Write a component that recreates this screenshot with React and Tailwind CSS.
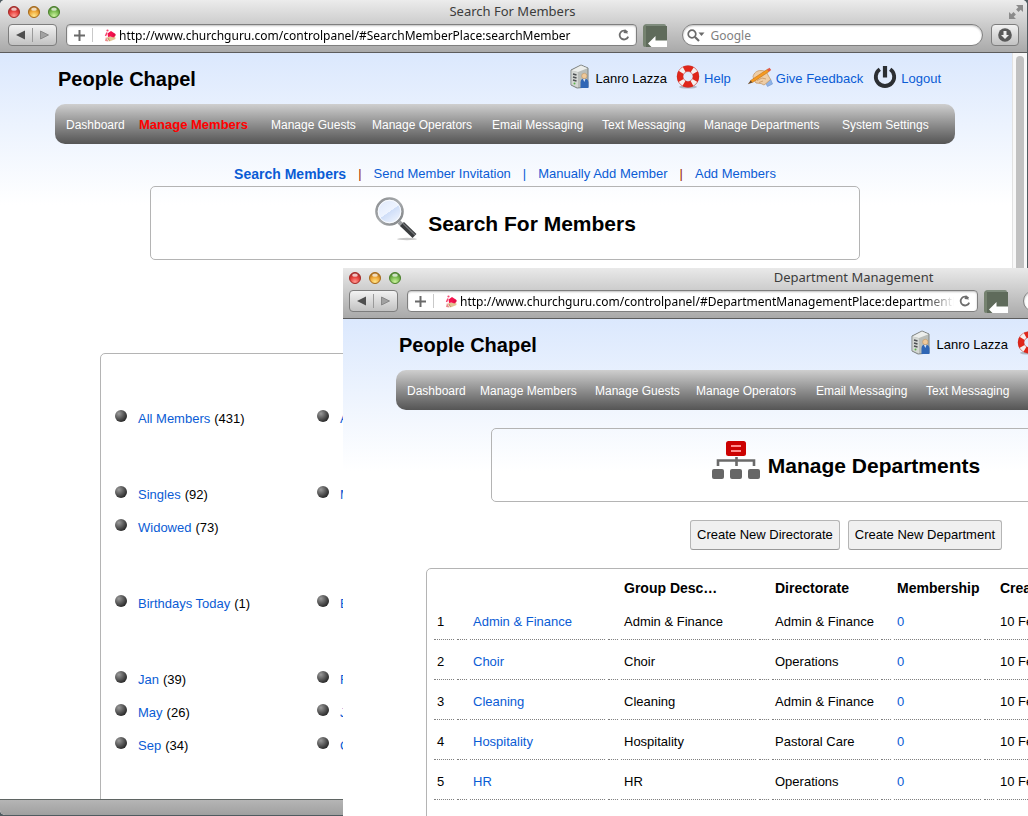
import React from "react";

const CHROME_FONT = "font-['Noto_Sans',sans-serif]";

/* ---------- browser chrome icons ---------- */

function TrafficLight({ id, label, dark, mid, light }) {
  return (
    <button type="button" aria-label={label} className="block h-3 w-3">
      <svg viewBox="0 0 12 12" className="block h-3 w-3">
        <defs>
          <radialGradient id={id} cx="50%" cy="85%" r="80%">
            <stop offset="0" stopColor={light} />
            <stop offset="0.55" stopColor={mid} />
            <stop offset="1" stopColor={dark} />
          </radialGradient>
        </defs>
        <circle cx="6" cy="6" r="5.5" fill={`url(#${id})`} stroke={dark} strokeWidth="1" />
        <ellipse cx="6" cy="3.2" rx="2.8" ry="1.6" fill="#fff" opacity="0.7" />
      </svg>
    </button>
  );
}

function Cupcake() {
  return (
    <svg viewBox="0 0 14 14" className="h-[14px] w-[14px] shrink-0" aria-hidden="true">
      <path d="M3.500 9.500l8.500-2 .5 3.500-6 2.500z" fill="#e3c493" />
      <path d="M3 9l2.500 4.500-3.500-.5z" fill="#e98a8a" />
      <path d="M5 10l1.500 3" stroke="#b98a55" strokeWidth="0.800" />
      <path d="M4.500 5.500L8 3l3 2 1.500 2-2 2.500-3-1L5 9z" fill="#f5124e" />
      <circle cx="11" cy="6.800" r="1.600" fill="#e00f45" />
      <circle cx="4.500" cy="2.500" r="1.100" fill="#f4476f" />
      <path d="M4 4.500L2.500 8" stroke="#f4476f" strokeWidth="1.500" />
    </svg>
  );
}

function Reload() {
  return (
    <svg viewBox="0 0 14 14" className="h-[14px] w-[14px]" aria-hidden="true">
      <path d="M10.400 4.200A4.400 4.400 0 1 0 11.200 8.600" fill="none" stroke="#6d6d6d" strokeWidth="1.800" />
      <path d="M6.500 5L11 5.500 8 1z" fill="#6d6d6d" />
    </svg>
  );
}

function ReaderTile() {
  return (
    <svg viewBox="0 0 25 24" className="h-6 w-[25px] shrink-0" aria-hidden="true">
      <rect x="1" y="0" width="22" height="22" rx="2" fill="#7f8c7d" />
      <rect x="0" y="1" width="4" height="22" rx="2" fill="#75826f" />
      <rect x="3" y="2" width="21" height="21" fill="#5f6b5b" />
      <path d="M24 16.500V23H8.500L5 19.500 12.500 12v4.500z" fill="#fff" />
    </svg>
  );
}

function Expand() {
  return (
    <svg viewBox="0 0 14 14" className="h-[14px] w-[14px]" aria-hidden="true" fill="#8b8b8b">
      <path d="M7 0h7v7l-2.300-2.300-2.200 2.200-2.400-2.400 2.200-2.200z" />
      <path d="M7 14H0V7l2.300 2.300 2.200-2.200 2.400 2.400-2.200 2.200z" />
    </svg>
  );
}

/* ---------- page icons ---------- */

function ServerUser() {
  return (
    <svg viewBox="0 0 20 25" className="h-[25px] w-5 shrink-0" aria-hidden="true">
      <path d="M1 6L11 1l7 3v19l-11 1-6-3z" fill="#b9bdb9" stroke="#7d8280" strokeWidth="1" />
      <path d="M1.500 6.500L11 1.500l6.500 2.700L8 8z" fill="#eceeec" />
      <path d="M1.500 6.500L8 8.500v15l-6.500-3z" fill="#d4d7d4" />
      <path d="M3 10l3.500 1M3 13l3.500 1M3 16l3.500 1" stroke="#4c5052" strokeWidth="1.400" />
      <circle cx="4.500" cy="19.500" r="1" fill="#5bb54a" />
      <path d="M10.500 24v-5.500c0-2.500 1.500-4 3.700-4s4.300 1.500 4.300 4V24z" fill="#2f66b5" />
      <path d="M13 15h2.500l-1.200 3z" fill="#dfe9f7" />
      <circle cx="14.300" cy="12" r="2.700" fill="#efc99a" stroke="#b98c58" strokeWidth="0.500" />
    </svg>
  );
}

function Lifebuoy() {
  return (
    <svg viewBox="0 0 24 24" className="h-6 w-6 shrink-0" aria-hidden="true">
      <ellipse cx="12" cy="22" rx="9" ry="1.600" fill="#000" opacity="0.22" />
      <circle cx="12" cy="11.500" r="8" fill="none" stroke="#e0261a" strokeWidth="6.200" />
      <circle
        cx="12"
        cy="11.500"
        r="8"
        fill="none"
        stroke="#f4f1f0"
        strokeWidth="6"
        strokeDasharray="4.200 8.366"
        transform="rotate(30 12 11.500)"
      />
      <circle cx="12" cy="11.500" r="10.900" fill="none" stroke="#b8302a" strokeWidth="0.500" opacity="0.7" />
      <circle cx="12" cy="11.500" r="5" fill="none" stroke="#b8302a" strokeWidth="0.500" opacity="0.7" />
    </svg>
  );
}

function WritingHand() {
  return (
    <svg viewBox="0 0 26 20" className="h-5 w-[26px] shrink-0" aria-hidden="true">
      <path d="M18 15l5.500-3 2 5-5 2.500z" fill="#8fb3e6" stroke="#6f96d0" strokeWidth="0.600" />
      <path
        d="M6 9.500c1-3.500 3.500-6 8-6 3.500 0 6 1.500 7 4.500l2.500 4.500-4.500 4-2 1.500-3-1.500-5-.5-2-3z"
        fill="#eecda6"
        stroke="#c49a6c"
        strokeWidth="0.800"
      />
      <path d="M10 13.500l5-2.500 4 1M12 15.500l4-1.500" stroke="#c08c58" strokeWidth="0.700" fill="none" />
      <path d="M3.500 13.500L20.500 2.200l1.600 2.300L5.500 15.500z" fill="#f59a22" stroke="#b8690f" strokeWidth="0.500" />
      <path d="M20 2.500l2.500-1.700 1.700 2.300-2.300 1.600z" fill="#e05a48" />
      <path d="M3.500 13.500L0.800 17.300l4.700-1.800z" fill="#6d4a26" />
    </svg>
  );
}

function Power() {
  return (
    <svg viewBox="0 0 24 24" className="h-6 w-6 shrink-0" aria-hidden="true">
      <path d="M6.800 4.200a9.200 9.200 0 1 0 10.400 0" fill="none" stroke="#2c2f33" strokeWidth="3.800" />
      <path d="M12 1v11.500" stroke="#2c2f33" strokeWidth="4.200" />
    </svg>
  );
}

function Magnifier() {
  return (
    <svg viewBox="0 0 44 45" className="h-[45px] w-11 shrink-0" aria-hidden="true">
      <defs>
        <linearGradient id="lens" x1="0.150" y1="0" x2="0.850" y2="1">
          <stop offset="0" stopColor="#dfe9fb" />
          <stop offset="0.500" stopColor="#eef4ff" />
          <stop offset="0.510" stopColor="#cfdef8" />
          <stop offset="1" stopColor="#f6f9ff" />
        </linearGradient>
        <linearGradient id="rim" x1="0" y1="0" x2="1" y2="1">
          <stop offset="0" stopColor="#8a8d90" />
          <stop offset="0.500" stopColor="#a9acae" />
          <stop offset="1" stopColor="#7b7e81" />
        </linearGradient>
      </defs>
      <ellipse cx="33" cy="43" rx="10" ry="1.200" fill="#000" opacity="0.22" />
      <path d="M25 26l4 4" stroke="#9b9ea1" strokeWidth="4" />
      <path d="M28 28L40.500 40" stroke="#3a3c3e" strokeWidth="5.600" />
      <path d="M28.500 27L41 39" stroke="#74777a" strokeWidth="1.200" />
      <circle cx="15.500" cy="15.500" r="13" fill="url(#lens)" stroke="url(#rim)" strokeWidth="2.600" />
      <circle cx="15.500" cy="15.500" r="11.300" fill="none" stroke="#fff" strokeWidth="0.800" />
    </svg>
  );
}

function OrgChart() {
  return (
    <svg viewBox="0 0 48 38" className="h-[38px] w-12 shrink-0" aria-hidden="true">
      <rect x="14" y="0" width="20" height="15" rx="2.500" fill="#cc0202" />
      <path d="M19 5h10M19 10h10" stroke="#ff8d8d" strokeWidth="2" />
      <path d="M6 25v-5.500h36V25M24.500 16v9" fill="none" stroke="#6a6a6a" strokeWidth="2.600" />
      <rect x="0" y="28" width="12" height="10" rx="2" fill="#666" />
      <rect x="18" y="28" width="12" height="10" rx="2" fill="#666" />
      <rect x="36" y="28" width="12" height="10" rx="2" fill="#666" />
    </svg>
  );
}

/* ---------- window ---------- */

function BrowserWindow({ id, title, url, scrollbar, children }) {
  return (
    <section className="flex h-full w-full flex-col overflow-hidden rounded-[5px] bg-white">
      <header
        className={`${CHROME_FONT} shrink-0 border-b border-[#5c5c5c] bg-gradient-to-b from-[#ececec] to-[#a9a9a9]`}
      >
        <div className="flex h-6 items-center justify-between pr-1 pl-2">
          <div className="flex w-[60px] gap-2">
            <TrafficLight id={`${id}-red`} label="Close" dark="#a32a27" mid="#e8423e" light="#ff9b93" />
            <TrafficLight id={`${id}-yellow`} label="Minimize" dark="#a5691a" mid="#f0a838" light="#ffe78c" />
            <TrafficLight id={`${id}-green`} label="Zoom" dark="#4a7f2b" mid="#7dbd52" light="#cdf3a0" />
          </div>
          <h1 className="pb-[2px] text-[13px] leading-5 text-[#3c3c3c]">{title}</h1>
          <button type="button" aria-label="Full screen" className="flex w-[66px] justify-end">
            <Expand />
          </button>
        </div>
        <div className="flex h-7 items-start pr-2 pl-2">
          <div className="mr-[9px] flex h-[22px] w-[49px] shrink-0 rounded-[4px] border border-[#7d7d7d] bg-gradient-to-b from-[#f2f2f2] to-[#c2c2c2]">
            <button type="button" aria-label="Back" className="flex flex-1 items-center justify-center">
              <svg viewBox="0 0 9 10" className="h-[10px] w-[9px]">
                <path d="M0 5l9-4.500v9z" fill="#4f4f4f" />
              </svg>
            </button>
            <span className="my-[3px] w-px bg-[#9a9a9a]" />
            <button type="button" aria-label="Forward" className="flex flex-1 items-center justify-center">
              <svg viewBox="0 0 9 10" className="h-[10px] w-[9px]">
                <path d="M8.500 5l-8-4v8z" fill="#a2a2a2" stroke="#7c7c7c" strokeWidth="0.800" />
              </svg>
            </button>
          </div>
          <div className="flex h-[22px] min-w-0 flex-[573] items-center rounded-[4px] border border-[#7f7f7f] bg-white pr-[5px] shadow-[inset_0_1px_2px_rgba(0,0,0,0.25)]">
            <button type="button" aria-label="Add bookmark" className="flex w-[25px] shrink-0 justify-center">
              <svg viewBox="0 0 11 11" className="h-[11px] w-[11px]">
                <path d="M5.500 0v11M0 5.500h11" stroke="#6a6a6a" strokeWidth="2" />
              </svg>
            </button>
            <span className="mr-[10px] h-[14px] w-px shrink-0 bg-[#c9c9c9]" />
            <Cupcake />
            <input
              aria-label="Address"
              defaultValue={url}
              className="ml-[2px] h-5 min-w-0 flex-1 bg-transparent text-[12px] text-black outline-none [mask-image:linear-gradient(to_right,#000_calc(100%-30px),transparent)]"
            />
            <button type="button" aria-label="Reload" className="ml-1 shrink-0">
              <Reload />
            </button>
          </div>
          <span className="mr-[14px] ml-[6px]">
            <ReaderTile />
          </span>
          <div className="mr-2 flex h-[22px] min-w-0 flex-[299] items-center rounded-full border border-[#7f7f7f] bg-white pl-[4px] shadow-[inset_0_1px_2px_rgba(0,0,0,0.25)]">
            <svg viewBox="0 0 18 13" className="h-[13px] w-[18px] shrink-0" aria-hidden="true">
              <circle cx="5" cy="5" r="3.800" fill="none" stroke="#6a6a6a" strokeWidth="1.700" />
              <path d="M8 8l4 4" stroke="#6a6a6a" strokeWidth="2.200" />
              <path d="M11.500 3.500h6l-3 3.500z" fill="#6a6a6a" />
            </svg>
            <input
              aria-label="Google search"
              placeholder="Google"
              className="ml-[5px] h-5 min-w-0 flex-1 bg-transparent text-[12px] outline-none placeholder:text-[#808080]"
            />
          </div>
          <button
            type="button"
            aria-label="Downloads"
            className="flex h-[22px] w-7 shrink-0 items-center justify-center rounded-[4px] border border-[#7d7d7d] bg-gradient-to-b from-[#f2f2f2] to-[#c2c2c2]"
          >
            <svg viewBox="0 0 14 14" className="h-[14px] w-[14px]">
              <circle cx="7" cy="7" r="6.800" fill="#595959" />
              <path d="M5.500 3h3v4H11l-4 4-4-4h2.500z" fill="#eee" />
            </svg>
          </button>
        </div>
      </header>
      <div className="flex min-h-0 flex-1">
        <div className="min-w-0 flex-1 overflow-hidden bg-white bg-[linear-gradient(#dbe8fd,#ffffff)] bg-[length:100%_152px] bg-no-repeat pr-[2px]">
          {children}
        </div>
        {scrollbar ? (
          <div className="w-[15px] shrink-0 border-l border-[#e2e2e2] bg-[#f8f8f8] px-[3px] pt-[3px]">
            <div className="h-[380px] rounded-full bg-[#c1c1c1]" />
          </div>
        ) : (
          <div className="w-[15px] shrink-0" />
        )}
      </div>
      <footer className="h-4 shrink-0 border-t border-[#5f6563] bg-gradient-to-b from-[#b5b5b5] to-[#a0a0a0]" />
    </section>
  );
}

/* ---------- page parts ---------- */

const LINK = "text-[#0a5cd5]";

const NAV = [
  ["Dashboard", "w-[73px]"],
  ["Manage Members", "w-[115px]", "w-[132px]"],
  ["Manage Guests", "w-[101px]"],
  ["Manage Operators", "w-[120px]"],
  ["Email Messaging", "w-[110px]"],
  ["Text Messaging", "w-[102px]"],
  ["Manage Departments", "w-[138px]", "w-[155px]"],
  ["System Settings", "w-[98px]"],
];

function SiteHeader({ active }) {
  return (
    <div className="mx-auto max-w-[900px]">
      <div className="flex h-[51px] items-center justify-between pr-[14px] pl-[3px]">
        <h2 className="text-[20px] leading-6 font-bold">People Chapel</h2>
        <div className="flex h-7 items-center pb-1 text-[13px] leading-4">
          <span className="flex items-center gap-[5px]">
            <ServerUser />
            <span className="pt-1">Lanro Lazza</span>
          </span>
          <a href="#help" className={`${LINK} ml-[9px] flex items-center gap-1`}>
            <Lifebuoy />
            <span className="pt-1">Help</span>
          </a>
          <a href="#feedback" className={`${LINK} ml-4 flex items-center gap-[3px]`}>
            <WritingHand />
            <span className="pt-1">Give Feedback</span>
          </a>
          <a href="#logout" className={`${LINK} ml-[10px] flex items-center gap-1`}>
            <Power />
            <span className="pt-1">Logout</span>
          </a>
        </div>
      </div>
      <nav className="flex h-10 items-center rounded-[10px] bg-gradient-to-b from-[#cfcfcf] to-[#555555] pt-[2px] pl-[11px] text-[12px] leading-4 whitespace-nowrap text-white">
        {NAV.map(([name, width, activeWidth]) =>
          name === active ? (
            <a key={name} href="#nav" className={`${activeWidth} shrink-0 text-[13px] font-bold text-[#ff0000]`}>
              {name}
            </a>
          ) : (
            <a key={name} href="#nav" className={`${width} shrink-0`}>
              {name}
            </a>
          )
        )}
      </nav>
    </div>
  );
}

function TitlePanel({ icon, children }) {
  return (
    <div className="mx-auto flex h-[74px] max-w-[710px] items-center justify-center rounded-[5px] border border-[#b4b4b4]">
      {icon}
      <h3 className="pt-[2px] text-[21px] leading-6 font-bold">{children}</h3>
    </div>
  );
}

const GROUPS = [
  [[["All Members", 431], ["Active", 0]]],
  [[["Singles", 92], ["Married", 0]], [["Widowed", 73]]],
  [[["Birthdays Today", 1], ["Birthdays", 0]]],
  [
    [["Jan", 39], ["Feb", 0]],
    [["May", 26], ["Jun", 0]],
    [["Sep", 34], ["Oct", 0]],
  ],
];

function MemberLists() {
  return (
    <div className="mx-auto mt-[93px] max-w-[810px] rounded-[5px] border border-[#b4b4b4] pt-[5px] pb-20">
      {GROUPS.map((rows, g) => (
        <ul key={g} className="mt-[43px] pl-[14px]">
          {rows.map((cells, r) => (
            <li key={r} className="flex h-[33px] text-[13px] leading-[33px]">
              {cells.map(([name, count]) => (
                <span key={name} className="flex w-[202px]">
                  <span className="mt-2 mr-[11px] h-3 w-3 rounded-full bg-[radial-gradient(circle_at_32%_30%,#9a9a9a,#555_45%,#222_80%)]" />
                  <a href="#list" className={LINK}>
                    {name}
                  </a>
                  <span className="pl-1">({count})</span>
                </span>
              ))}
            </li>
          ))}
        </ul>
      ))}
    </div>
  );
}

const DEPARTMENTS = [
  ["Admin & Finance", "Admin & Finance"],
  ["Choir", "Operations"],
  ["Cleaning", "Admin & Finance"],
  ["Hospitality", "Pastoral Care"],
  ["HR", "Operations"],
];

const COLUMNS = ["", "", "Group Desc…", "Directorate", "Membership", "Created"];
const CELL = "h-10 border-b border-dotted border-[#808080] px-[3px] pt-1 align-middle";

function DepartmentTable() {
  return (
    <div className="mx-auto mt-[18px] max-w-[840px] rounded-[5px] border border-[#b4b4b4] pt-[7px] pb-10 pl-1">
      <table className="w-full table-fixed border-separate border-spacing-x-[3px] border-spacing-y-0 text-left text-[13px] leading-4">
        <colgroup>
          {["w-[20px]", "w-[135px]", "w-[135px]", "w-[106px]", "w-[87px]"].map((width, i) => (
            <React.Fragment key={i}>
              <col className={width} />
              <col className="w-[10px]" />
            </React.Fragment>
          ))}
          <col />
        </colgroup>
        <thead>
          <tr>
            {COLUMNS.map((name, i) => (
              <React.Fragment key={i}>
                <th scope="col" className="h-6 px-[3px] align-middle text-[14px] font-bold whitespace-nowrap">
                  {name}
                </th>
                {i < 5 && <td />}
              </React.Fragment>
            ))}
          </tr>
        </thead>
        <tbody>
          {DEPARTMENTS.map(([name, directorate], row) => {
            const cells = [
              row + 1,
              <a href="#department" className={LINK}>
                {name}
              </a>,
              name,
              directorate,
              <a href="#membership" className={LINK}>
                0
              </a>,
              "10 Feb 2013",
            ];
            return (
              <tr key={name}>
                {cells.map((cell, i) => (
                  <React.Fragment key={i}>
                    <td className={CELL}>{cell}</td>
                    {i < 5 && <td className="border-b border-dotted border-[#808080]" />}
                  </React.Fragment>
                ))}
              </tr>
            );
          })}
        </tbody>
      </table>
    </div>
  );
}

function ActionButton({ children }) {
  return (
    <button
      type="button"
      className="h-[30px] rounded-[3px] border border-[#b5b5b5] border-b-[#999999] bg-[#f0f0f0] px-[6px] text-[13px]"
    >
      {children}
    </button>
  );
}

export default function App() {
  return (
    <main className="relative h-screen overflow-hidden bg-[#4f5b60] pr-px pb-px font-['Liberation_Sans',Arial,sans-serif] text-black">
      <BrowserWindow
        id="members"
        title="Search For Members"
        url="http://www.churchguru.com/controlpanel/#SearchMemberPlace:searchMember"
        scrollbar
      >
        <SiteHeader active="Manage Members" />
        <div className="mt-5 mb-[2px] flex h-5 items-center justify-center gap-3 text-[13px] leading-4">
          <a href="#search" className={`${LINK} text-[14px] font-bold`}>
            Search Members
          </a>
          <span className="text-[#992200]">|</span>
          <a href="#invite" className={LINK}>
            Send Member Invitation
          </a>
          <span className={LINK}>|</span>
          <a href="#manual" className={LINK}>
            Manually Add Member
          </a>
          <span className="text-[#992200]">|</span>
          <a href="#add" className={LINK}>
            Add Members
          </a>
        </div>
        <TitlePanel
          icon={
            <span className="mr-[10px] -mt-[10px]">
              <Magnifier />
            </span>
          }
        >
          Search For Members
        </TitlePanel>
        <MemberLists />
      </BrowserWindow>

      <div className="absolute top-[266px] left-[341px] h-full w-full pr-px [clip-path:inset(2px_0_0_2px)]">
        <BrowserWindow
          id="departments"
          title="Department Management"
          url="http://www.churchguru.com/controlpanel/#DepartmentManagementPlace:departmentManagement"
        >
          <SiteHeader active="Manage Departments" />
          <div className="mt-[18px]">
            <TitlePanel
              icon={
                <span className="mr-2 -mt-[10px]">
                  <OrgChart />
                </span>
              }
            >
              Manage Departments
            </TitlePanel>
          </div>
          <div className="mt-[18px] flex justify-center gap-2">
            <ActionButton>Create New Directorate</ActionButton>
            <ActionButton>Create New Department</ActionButton>
          </div>
          <DepartmentTable />
        </BrowserWindow>
      </div>
    </main>
  );
}
